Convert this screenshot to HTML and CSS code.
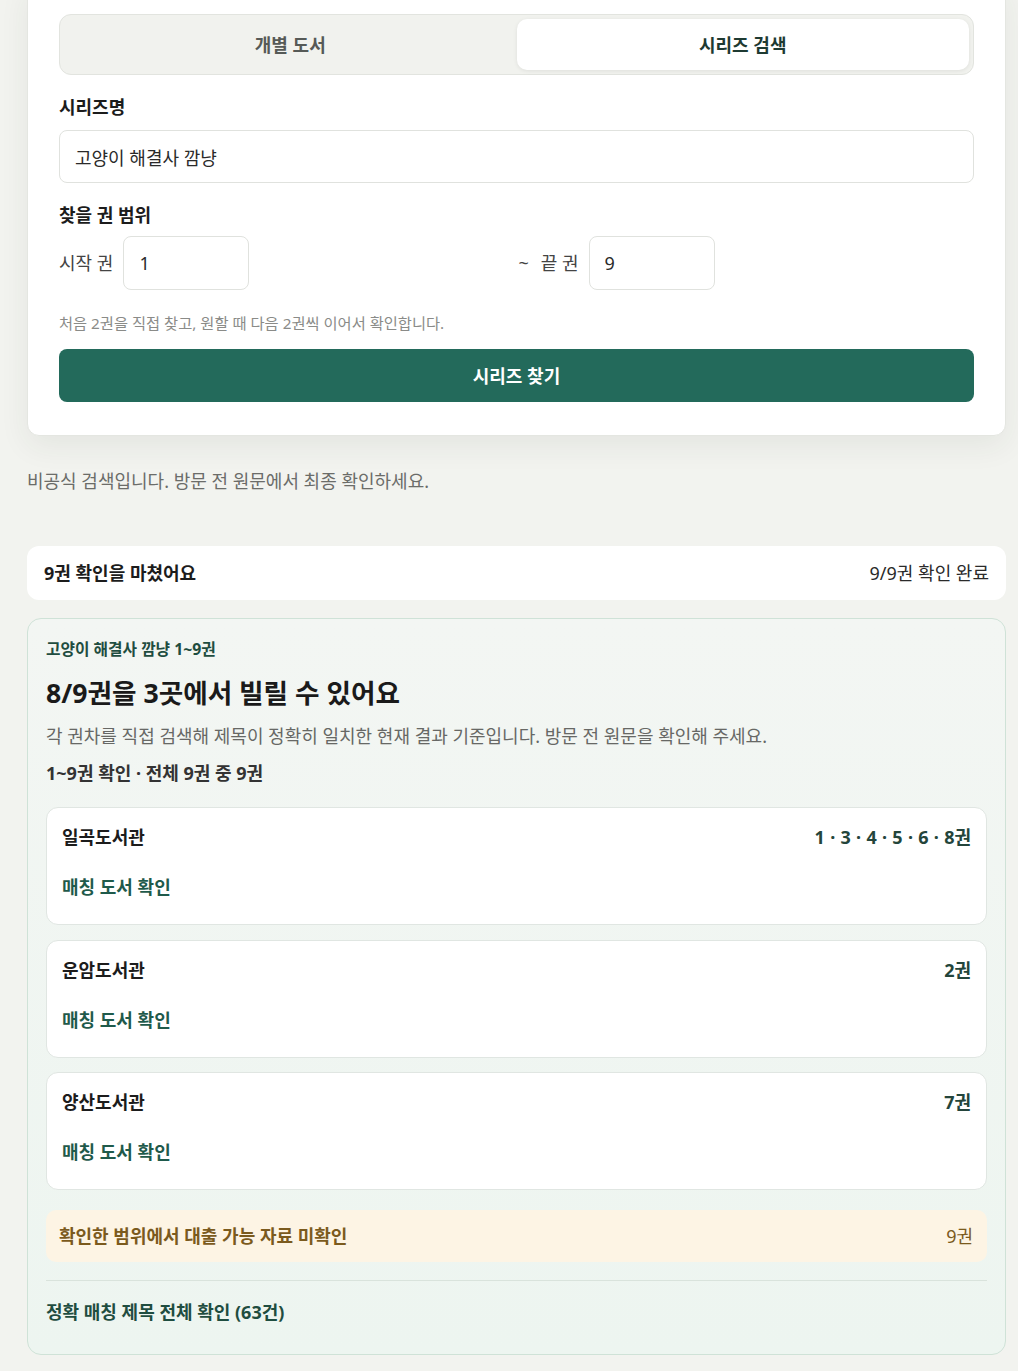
FILE: index.html
```html
<!doctype html>
<html lang="ko">
<head>
	<meta charset="utf-8">
	<title>시리즈 검색</title>
	<link rel="stylesheet" href="styles.css">
</head>
<body>
	<main class="page">
		<section class="search-card">
			<div class="tabs">
				<button class="tab" type="button">개별 도서</button>
				<button class="tab active" type="button">시리즈 검색</button>
			</div>

			<label class="field-label" for="series">시리즈명</label>
			<input class="text-input" id="series" type="text" value="고양이 해결사 깜냥">

			<div class="field-label range-label">찾을 권 범위</div>
			<div class="range">
				<label class="range-item">시작 권 <input class="num-input" type="text" value="1"></label>
				<label class="range-item"><span>~</span>끝 권 <input class="num-input" type="text" value="9"></label>
			</div>

			<p class="hint">처음 2권을 직접 찾고, 원할 때 다음 2권씩 이어서 확인합니다.</p>
			<button class="primary" type="button">시리즈 찾기</button>
		</section>

		<p class="disclaimer">비공식 검색입니다. 방문 전 원문에서 최종 확인하세요.</p>

		<div class="progress">
			<strong>9권 확인을 마쳤어요</strong>
			<span>9/9권 확인 완료</span>
		</div>

		<section class="result">
			<div class="result-tag">고양이 해결사 깜냥 1~9권</div>
			<h2 class="result-title">8/9권을 3곳에서 빌릴 수 있어요</h2>
			<p class="result-desc">각 권차를 직접 검색해 제목이 정확히 일치한 현재 결과 기준입니다. 방문 전 원문을 확인해 주세요.</p>
			<div class="result-count">1~9권 확인 · 전체 9권 중 9권</div>

			<ul class="libs">
				<li class="lib">
					<div class="lib-head"><strong>일곡도서관</strong><span class="vols">1 · 3 · 4 · 5 · 6 · 8권</span></div>
					<a class="lib-link" href="#">매칭 도서 확인</a>
				</li>
				<li class="lib">
					<div class="lib-head"><strong>운암도서관</strong><span class="vols">2권</span></div>
					<a class="lib-link" href="#">매칭 도서 확인</a>
				</li>
				<li class="lib">
					<div class="lib-head"><strong>양산도서관</strong><span class="vols">7권</span></div>
					<a class="lib-link" href="#">매칭 도서 확인</a>
				</li>
			</ul>

			<div class="missing">
				<strong>확인한 범위에서 대출 가능 자료 미확인</strong>
				<span>9권</span>
			</div>

			<a class="all-link" href="#">정확 매칭 제목 전체 확인 (63건)</a>
		</section>
	</main>
</body>
</html>
```

FILE: styles.css
```css
*{
	margin:0;
	padding:0;
	box-sizing:border-box;
}
html{
	font-size:18px;
}
body{
	background:#f2f3ef;
	color:#1c1c1c;
	font-family:"Noto Sans","Noto Sans CJK KR",sans-serif;
	font-size:1rem;
	line-height:26px;
}
.page{
	padding:0 12px 16px 27px;
}

/* 검색 카드 */
.search-card{
	margin-top:-19px;
	background:#fff;
	border:1px solid #e4e6e1;
	border-radius:12px;
	padding:32px 31px 33px;
	box-shadow:0 10px 30px rgba(40,50,40,.07);
}
.tabs{
	display:flex;
	padding:4px;
	background:#f1f2ee;
	border:1px solid #e2e4df;
	border-radius:12px;
}
.tab{
	flex:1;
	height:51px;
	border:0;
	background:none;
	border-radius:10px;
	font:inherit;
	font-weight:700;
	color:#565a57;
	cursor:pointer;
}
.tab.active{
	background:#fff;
	color:#1e3a32;
	box-shadow:0 1px 4px rgba(0,0,0,.08);
}
.field-label{
	display:block;
	margin:19px 0 10px;
	font-weight:700;
}
.range-label{
	margin-bottom:8px;
}
.text-input,
.num-input{
	height:53px;
	border:1px solid #e0e2de;
	border-radius:8px;
	padding:0 15px;
	font:inherit;
	color:#2a2a2a;
	outline:none;
	background:#fff;
}
.text-input{
	width:100%;
}
.range{
	display:grid;
	grid-template-columns:1fr 1fr;
	column-gap:4px;
}
.range-item{
	display:flex;
	align-items:center;
	gap:10px;
	color:#444;
}
.range-item span{
	margin-right:2px;
}
.num-input{
	width:126px;
	height:54px;
}
.hint{
	margin-top:22px;
	font-size:.85rem;
	line-height:22px;
	color:#8a8b88;
}
.primary{
	display:block;
	width:100%;
	height:53px;
	margin-top:15px;
	border:0;
	border-radius:8px;
	background:#236a5b;
	color:#fff;
	font:inherit;
	font-weight:700;
	cursor:pointer;
}

.disclaimer{
	margin-top:32px;
	color:#6b6c69;
}

/* 진행 상태 */
.progress{
	display:flex;
	justify-content:space-between;
	align-items:center;
	height:54px;
	margin-top:52px;
	padding:0 17px;
	background:#fff;
	border-radius:12px;
}
.progress span{
	color:#2a2a2a;
}

/* 결과 */
.result{
	margin-top:18px;
	padding:19px 18px 29px;
	border:1px solid #cfe2d7;
	border-radius:14px;
	background:linear-gradient(180deg,#f3f6f3,#edf5f0);
}
.result-tag{
	font-size:.875rem;
	line-height:22px;
	font-weight:700;
	color:#1f4d40;
}
.result-title{
	margin-top:15px;
	font-size:1.48rem;
	line-height:36px;
	font-weight:700;
	color:#1a1a1a;
}
.result-desc{
	margin-top:12px;
	color:#676865;
}
.result-count{
	margin-top:11px;
	font-weight:700;
	color:#333;
}
.libs{
	list-style:none;
	margin-top:21px;
	display:flex;
	flex-direction:column;
	gap:14.5px;
}
.lib{
	background:#fff;
	border:1px solid #e0e6e2;
	border-radius:12px;
	padding:16px 15px 24px;
}
.lib-head{
	display:flex;
	justify-content:space-between;
}
.vols{
	font-weight:700;
	color:#24453b;
	word-spacing:.6px;
}
.lib-link{
	display:block;
	margin-top:24px;
	font-weight:700;
	color:#1f5a4b;
	text-decoration:none;
}
.missing{
	display:flex;
	justify-content:space-between;
	margin-top:19.5px;
	padding:13px 14px 13px 13px;
	background:#fdf4e4;
	border-radius:10px;
	color:#7b5a1d;
}
.all-link{
	display:block;
	margin-top:18px;
	padding-top:18px;
	border-top:1px solid #d9e3dc;
	font-weight:700;
	color:#1f4d40;
	text-decoration:none;
}
```
